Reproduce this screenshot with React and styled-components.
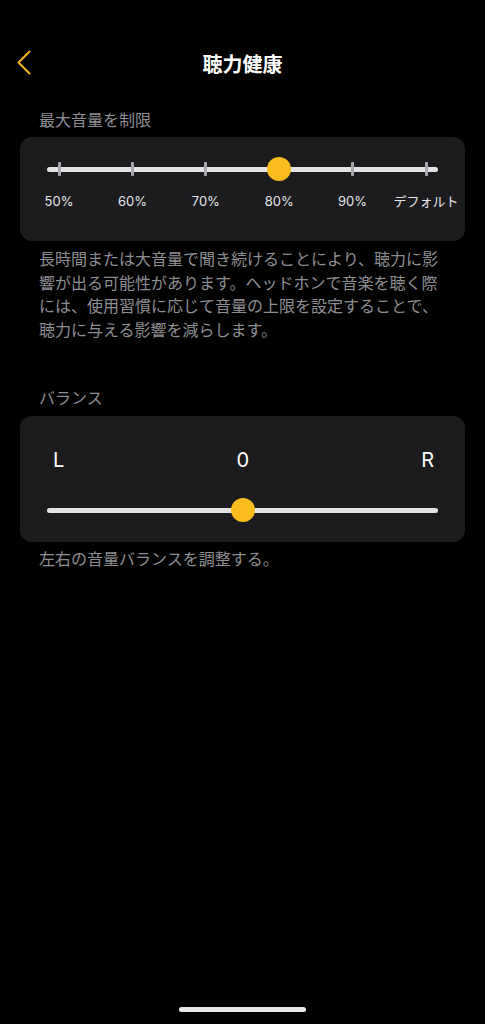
import React from "react";
import styled, { createGlobalStyle } from "styled-components";

const Global = createGlobalStyle`
  html, body { margin: 0; padding: 0; background: #000; }
  body { font-family: "Inter", "Noto Sans CJK JP", sans-serif; -webkit-font-smoothing: antialiased; }
  * { box-sizing: border-box; }
`;

const Screen = styled.div`
  min-height: 100vh;
  background: #000;
  display: flex;
  flex-direction: column;
`;

const Header = styled.header`
  margin-top: 40px;
  height: 48px;
  display: grid;
  grid-template-columns: 60px 1fr 60px;
  align-items: center;
  padding-left: 17px;
`;

const BackButton = styled.button`
  background: none;
  border: 0;
  padding: 0;
  width: 14px;
  height: 25px;
  display: flex;
  align-items: center;
  margin-top: -3px;
  cursor: pointer;
`;

const Title = styled.h1`
  margin: 0;
  text-align: center;
  color: #fff;
  font-family: "Noto Sans CJK JP", sans-serif;
  font-size: 20px;
  font-weight: 700;
  line-height: 24px;
  margin-left: -17px;
`;

const Content = styled.main`
  padding: 0 20px;
  display: flex;
  flex-direction: column;
`;

const SectionLabel = styled.div`
  padding-left: 19px;
  color: #8e8e93;
  font-size: 16px;
  line-height: 20px;
  margin-top: ${(p) => p.$top}px;
  margin-bottom: ${(p) => p.$bottom}px;
`;

const Card = styled.section`
  background: #1c1c1e;
  border-radius: 12px;
  padding: ${(p) => p.$pad};
`;

const Track = styled.div`
  position: relative;
  height: 24px;
  &::before {
    content: "";
    position: absolute;
    left: 0;
    right: 0;
    top: 50%;
    height: 5px;
    margin-top: -2.5px;
    border-radius: 3px;
    background: #e3e3e6;
  }
`;

const Tick = styled.span`
  position: absolute;
  top: 50%;
  width: 3px;
  height: 14px;
  margin-top: -7px;
  margin-left: -1.5px;
  background: #a9a9ad;
  border-radius: 1px;
`;

const Thumb = styled.span`
  position: absolute;
  top: 50%;
  width: 24px;
  height: 24px;
  margin-top: -12px;
  margin-left: -12px;
  border-radius: 50%;
  background: #fbbd1e;
`;

const StepLabels = styled.div`
  display: grid;
  grid-template-columns: repeat(6, 1fr);
  margin: 12px -24.7px 0;
`;

const StepLabel = styled.span`
  text-align: center;
  color: #e5e5ea;
  font-size: 13px;
  line-height: 16px;
  white-space: nowrap;
`;

const BalanceRow = styled.div`
  display: flex;
  justify-content: space-between;
  padding: 0 4px 0 6px;
  margin-bottom: 26px;
`;

const BalanceMark = styled.span`
  color: #fff;
  font-size: 20px;
  line-height: 24px;
`;

const Description = styled.p`
  margin: ${(p) => p.$top}px 0 0;
  padding: 0 19px;
  color: #8e8e93;
  font-size: 16px;
  line-height: 23.5px;
`;

const HomeIndicator = styled.div`
  margin: auto auto 12px;
  width: 127px;
  height: 5px;
  border-radius: 3px;
  background: #e8e8e8;
`;

const steps = ["50%", "60%", "70%", "80%", "90%", "デフォルト"];

const pos = (i, n) => `calc(12px + (100% - 24px) * ${i / n})`;

export default function App() {
  const selected = 3;
  return (
    <Screen>
      <Global />
      <Header>
        <BackButton aria-label="戻る">
          <svg width="14" height="25" viewBox="0 0 14 25">
            <polyline
              points="12.5,1.5 1.5,12.5 12.5,23.5"
              fill="none"
              stroke="#f2b51c"
              strokeWidth="2"
              strokeLinecap="round"
              strokeLinejoin="round"
            />
          </svg>
        </BackButton>
        <Title>聴力健康</Title>
        <span />
      </Header>
      <Content>
        <SectionLabel $top={22} $bottom={7}>最大音量を制限</SectionLabel>
        <Card $pad="20px 27px 32px">
          <Track>
            {steps.map((s, i) => (
              <Tick key={s} style={{ left: pos(i, 5) }} />
            ))}
            <Thumb style={{ left: pos(selected, 5) }} />
          </Track>
          <StepLabels>
            {steps.map((s) => (
              <StepLabel key={s}>{s}</StepLabel>
            ))}
          </StepLabels>
        </Card>
        <Description $top={7}>
          長時間または大音量で聞き続けることにより、聴力に影響が出る可能性があります。ヘッドホンで音楽を聴く際には、使用習慣に応じて音量の上限を設定することで、聴力に与える影響を減らします。
        </Description>

        <SectionLabel $top={46} $bottom={8}>バランス</SectionLabel>
        <Card $pad="32px 27px 20px">
          <BalanceRow>
            <BalanceMark>L</BalanceMark>
            <BalanceMark>0</BalanceMark>
            <BalanceMark>R</BalanceMark>
          </BalanceRow>
          <Track>
            <Thumb style={{ left: "50%" }} />
          </Track>
        </Card>
        <Description $top={6}>左右の音量バランスを調整する。</Description>
      </Content>
      <HomeIndicator />
    </Screen>
  );
}
